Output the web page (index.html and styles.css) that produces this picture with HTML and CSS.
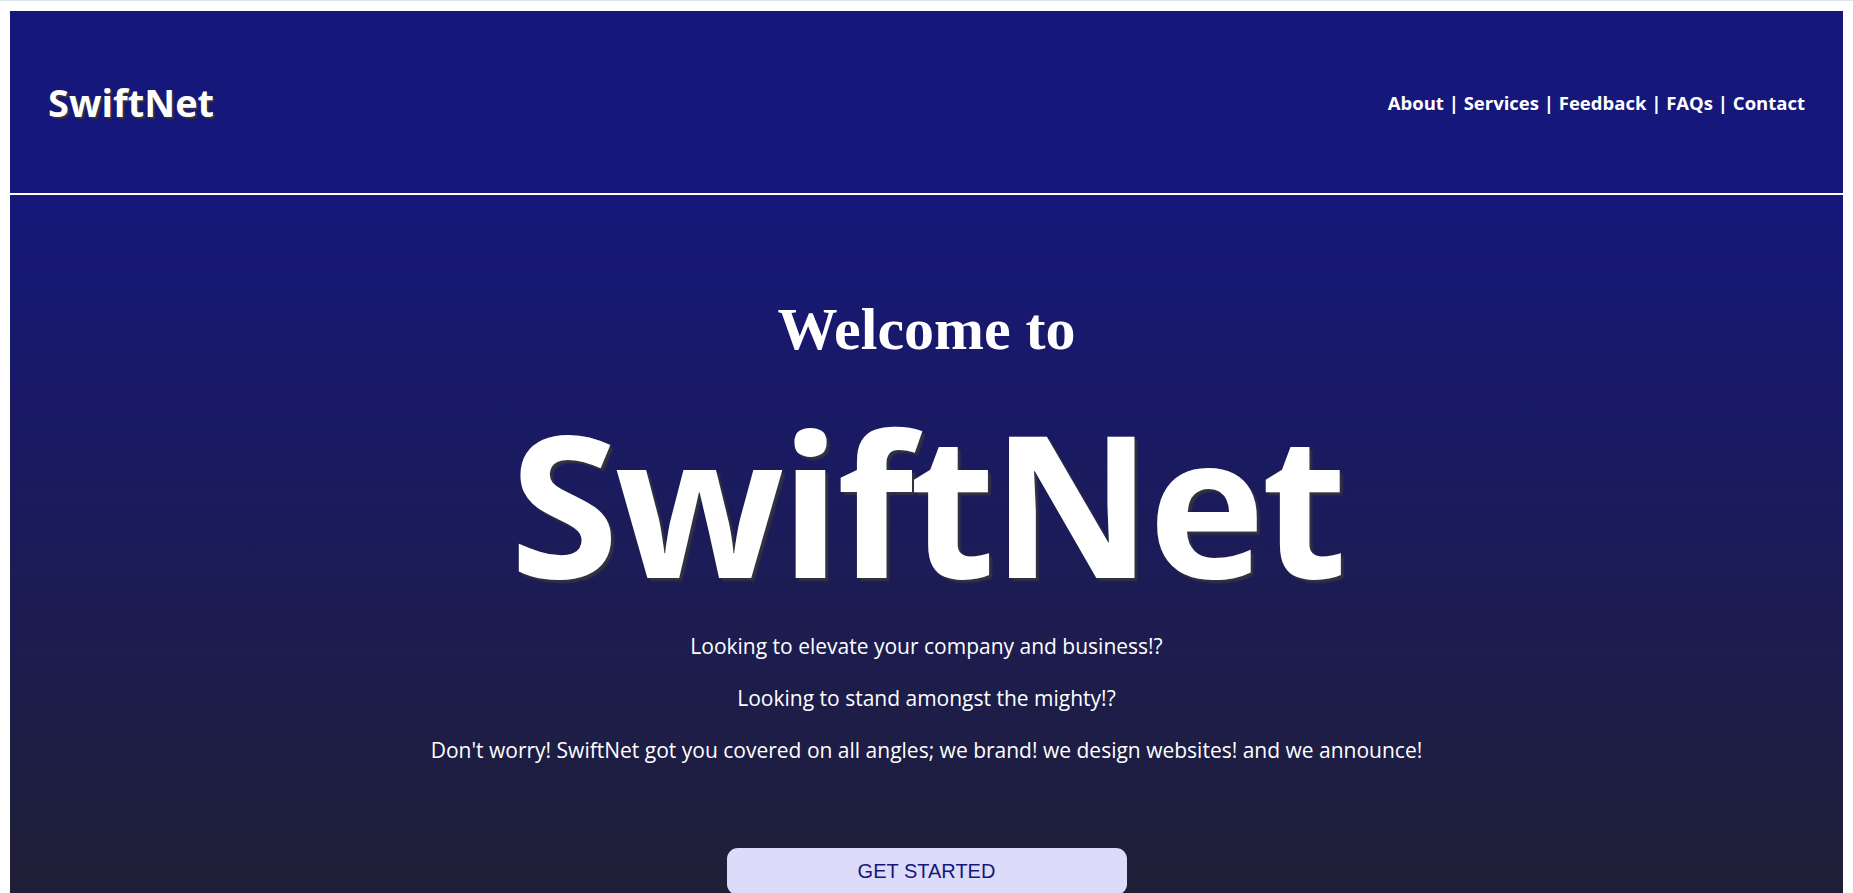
FILE: index.html
```html
<!DOCTYPE html>
<html lang="en">
<head>
<meta charset="utf-8">
<title>SwiftNet</title>
<link rel="stylesheet" href="styles.css">
</head>
<body>
<header class="site-header">
  <div class="logo">SwiftNet</div>
  <nav class="nav">
    <a href="#">About</a> | <a href="#">Services</a> | <a href="#">Feedback</a> | <a href="#">FAQs</a> | <a href="#">Contact</a>
  </nav>
</header>
<section class="hero">
  <h2 class="welcome">Welcome to</h2>
  <h1 class="brand">SwiftNet</h1>
  <p class="lead">Looking to elevate your company and business!?</p>
  <p class="lead">Looking to stand amongst the mighty!?</p>
  <p class="lead">Don't worry! SwiftNet got you covered on all angles; we brand! we design websites! and we announce!</p>
  <button class="cta">GET STARTED</button>
</section>
</body>
</html>
```
FILE: styles.css
```css
html {
  border-top: 1px solid #dfe5ec;
  background: #ffffff;
}
body {
  margin: 10px 10px 0 10px;
  font-family: "Open Sans", "Noto Sans", sans-serif;
  color: #ffffff;
}
.site-header {
  height: 182px;
  background: #16177a;
  border-bottom: 2px solid #ffffff;
  display: flex;
  align-items: center;
  justify-content: space-between;
  padding: 0 38px;
}
.logo {
  font-weight: 700;
  font-size: 38px;
  line-height: 1;
  text-shadow: 2px 2px 1px #333340;
}
.nav {
  font-weight: 700;
  font-size: 18.5px;
  color: #ffffff;
}
.nav a {
  color: #ffffff;
  text-decoration: none;
}
.hero {
  background: linear-gradient(to bottom, #16177a 0%, #1c1c55 45%, #202027 100%);
  min-height: 760px;
  display: flex;
  flex-direction: column;
  align-items: center;
  padding-top: 100px;
}
.welcome {
  margin: 0;
  font-family: "Liberation Serif", "Times New Roman", serif;
  font-weight: 700;
  font-size: 60px;
  line-height: normal;
}
.brand {
  margin: 38px 0 0 0;
  font-weight: 700;
  font-size: 198px;
  letter-spacing: -4px;
  line-height: 1;
  text-shadow: 3px 3px 2px #333340;
}
.lead {
  margin: 0;
  font-size: 21px;
  line-height: 28px;
}
.brand + .lead {
  margin-top: 32px;
}
.lead + .lead {
  margin-top: 24px;
}
.cta {
  margin-top: 84px;
  width: 400px;
  padding: 12px 0;
  background: #dcdcfa;
  color: #16177a;
  border: none;
  border-radius: 11px;
  font-family: "Liberation Sans", Arial, sans-serif;
  font-size: 20px;
  line-height: 23px;
}
```
